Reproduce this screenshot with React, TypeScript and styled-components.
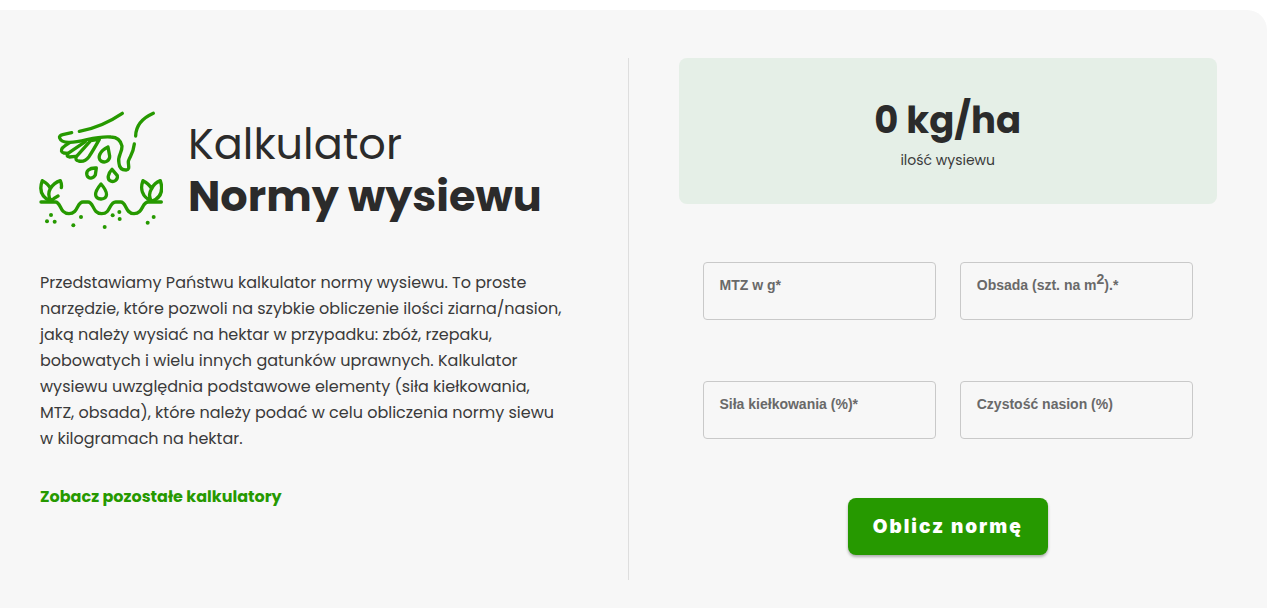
import React, { useState } from "react";
import styled, { createGlobalStyle } from "styled-components";

const GlobalStyle = createGlobalStyle`
  *, *::before, *::after { box-sizing: border-box; }
  body {
    margin: 0;
    background: #ffffff;
    color: #2b2b2b;
    font-family: Poppins, Inter, "Liberation Sans", sans-serif;
  }
`;

const Page = styled.main`
  display: flex;
  flex-direction: column;
  min-height: 100vh;
  padding: 10px 13px 0 0;
`;

const Panel = styled.section`
  flex: 1;
  display: grid;
  grid-template-columns: 1fr 1fr;
  padding: 48px 50px 28px 40px;
  background: #f7f7f7;
  border-radius: 0 20px 0 0;
`;

const Intro = styled.div`
  padding: 52px 40px 0 0;
  border-right: 1px solid #dedede;
`;

const Heading = styled.header`
  display: flex;
  align-items: center;
  gap: 25px;
`;

const SowingIcon = styled.svg`
  flex: none;
  width: 124px;
  height: 120px;
  margin-left: -1px;
  fill: none;
  stroke: #269900;
  stroke-width: 10;
  stroke-linecap: round;
  stroke-linejoin: round;
`;

const Title = styled.h1`
  margin: 0;
  font-size: 43px;
  line-height: 52px;
  font-weight: 400;
  white-space: nowrap;
`;

const Strong = styled.strong`
  display: block;
  font-weight: 700;
`;

const Description = styled.p`
  margin: 40px 0 0;
  font-size: 16px;
  line-height: 26px;
  color: #3a3a3a;
  white-space: nowrap;
`;

const MoreLink = styled.a`
  display: inline-block;
  margin-top: 32px;
  font-size: 16px;
  line-height: 26px;
  font-weight: 700;
  color: #269900;
  text-decoration: none;
`;

const Calculator = styled.div`
  padding-left: 50px;
`;

const Result = styled.div`
  display: flex;
  flex-direction: column;
  align-items: center;
  padding: 36px 24px 30px;
  border-radius: 8px;
  background: #e5efe7;
`;

const ResultValue = styled.output`
  font-size: 37px;
  line-height: 52px;
  font-weight: 700;
`;

const ResultCaption = styled.span`
  font-size: 14px;
  line-height: 28px;
  color: #3a3a3a;
`;

const Form = styled.form`
  display: grid;
  grid-template-columns: 1fr 1fr;
  gap: 61px 24px;
  padding: 58px 24px 0;
`;

const Field = styled.div`
  position: relative;
`;

const FieldInput = styled.input`
  display: block;
  width: 100%;
  height: 58px;
  padding: 28px 16px 6px;
  border: 1px solid #c9c9c9;
  border-radius: 4px;
  background: transparent;
  font: 16px "Liberation Sans", sans-serif;
  color: #2b2b2b;
`;

const FieldLabel = styled.label`
  position: absolute;
  top: 13px;
  left: 17px;
  font: 700 14px/20px "Liberation Sans", sans-serif;
  color: #696969;
  white-space: nowrap;

  sup {
    font-size: 14px;
    line-height: 0;
  }
`;

const Submit = styled.button`
  grid-column: 1 / -1;
  justify-self: center;
  height: 57px;
  margin-top: -2px;
  padding: 0 25px;
  border: 0;
  border-radius: 8px;
  background: #269900;
  box-shadow: 0 2px 3px rgba(0, 0, 0, 0.3);
  font: 900 19px/28px Inter, sans-serif;
  letter-spacing: 2px;
  color: #ffffff;
  cursor: pointer;
`;

const fields = [
  { id: "mtz", label: <>MTZ w g*</> },
  { id: "density", label: <>Obsada (szt. na m<sup>2</sup>).*</> },
  { id: "germination", label: <>Siła kiełkowania (%)*</> },
  { id: "purity", label: <>Czystość nasion (%)</> },
];

const soil = [
  [63, 346], [51, 365], [74, 366], [153, 352], [130, 377], [224, 382],
  [248, 347], [268, 337], [269, 358], [371, 352], [353, 369],
];

function Sowing() {
  return (
    <SowingIcon viewBox="27 31 372 360" aria-hidden="true">
      <path d="M148 95 Q215 83 277 41" />
      <path d="M370 41 Q318 64 317 109" />
      <path d="M125 99 L98 105 Q86 108 89 115 Q94 129 119 128 C160 128 194 108 243 112 Q270 113 276 139 C277 160 261 168 267 191 C268 204 276 211 288 211 C302 209 294 197 295 185 C301 167 309 164 313 133" />
      <path d="M119 129 Q106 137 97 145 Q90 156 101 160 L114 161" />
      <path d="M166 126 L114 161 Q107 169 118 172 L137 170" />
      <path d="M206 119 L182 123 L139 171 Q134 181 146 184 Q164 188 177 171 Q190 151 208 119" />
      <path d="M234 142 C207 155 202 175 213 184 C226 192 240 182 239 169 Z" />
      <path d="M199 205 C177 204 167 214 171 227 C176 239 190 237 196 226 Z" />
      <path d="M246 209 C232 223 231 239 242 244 C252 249 264 240 262 228 Z" />
      <path d="M213 253 C189 281 194 297 213 298 C233 297 237 280 213 253 Z" />
      <path d="M33 307 H76 C94 307 88 342 117 342 C145 342 140 307 159 307 H174 C192 307 187 342 215 342 C243 342 237 307 257 307 H272 C290 307 285 342 312 342 C340 342 335 307 355 307 H394" />
      <path d="M62 305 C32 291 28 267 37 243 Q56 253 61 267 Q72 249 91 243 Q96 254 94 264 M61 267 C52 283 57 295 63 305 Q70 296 84 289" />
      <path d="M365 305 C335 291 330 267 339 243 Q357 252 365 267 Q373 250 391 243 C400 272 393 295 365 305 M365 267 C355 282 358 295 365 305" />
      {soil.map(([x, y]) => (
        <circle key={`${x}-${y}`} cx={x} cy={y} r="6" fill="#269900" stroke="none" />
      ))}
    </SowingIcon>
  );
}

export default function App() {
  const [values, setValues] = useState<Record<string, string>>({});
  const [norm, setNorm] = useState(0);

  const calculate = (event: React.FormEvent) => {
    event.preventDefault();
    const read = (id: string, fallback = 0) =>
      parseFloat((values[id] || "").replace(",", ".")) || fallback;
    const germination = read("germination");
    const result = germination
      ? (read("mtz") * read("density")) / germination / (read("purity", 100) / 100)
      : 0;
    setNorm(Math.round(result));
  };

  return (
    <>
      <GlobalStyle />
      <Page>
        <Panel>
          <Intro>
            <Heading>
              <Sowing />
              <Title>
                Kalkulator <Strong>Normy wysiewu</Strong>
              </Title>
            </Heading>
            <Description>
              Przedstawiamy Państwu kalkulator normy wysiewu. To proste
              <br /> narzędzie, które pozwoli na szybkie obliczenie ilości ziarna/nasion,
              <br /> jaką należy wysiać na hektar w przypadku: zbóż, rzepaku,
              <br /> bobowatych i wielu innych gatunków uprawnych. Kalkulator
              <br /> wysiewu uwzględnia podstawowe elementy (siła kiełkowania,
              <br /> MTZ, obsada), które należy podać w celu obliczenia normy siewu
              <br /> w kilogramach na hektar.
            </Description>
            <MoreLink href="#kalkulatory">Zobacz pozostałe kalkulatory</MoreLink>
          </Intro>
          <Calculator>
            <Result>
              <ResultValue>{norm} kg/ha</ResultValue>
              <ResultCaption>ilość wysiewu</ResultCaption>
            </Result>
            <Form onSubmit={calculate}>
              {fields.map(({ id, label }) => (
                <Field key={id}>
                  <FieldInput
                    id={id}
                    inputMode="decimal"
                    value={values[id] || ""}
                    onChange={(e) => setValues({ ...values, [id]: e.target.value })}
                  />
                  <FieldLabel htmlFor={id}>{label}</FieldLabel>
                </Field>
              ))}
              <Submit type="submit">Oblicz normę</Submit>
            </Form>
          </Calculator>
        </Panel>
      </Page>
    </>
  );
}
